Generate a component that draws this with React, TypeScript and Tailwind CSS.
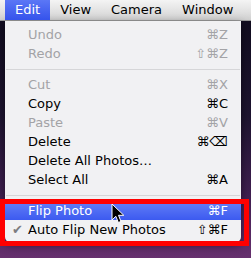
const menuBar = ["Edit", "View", "Camera", "Window"];

type Item = {
  label: string;
  shortcut?: string;
  disabled?: boolean;
  active?: boolean;
  checked?: boolean;
  separator?: boolean;
};

const items: Item[] = [
  { label: "Undo", shortcut: "⌘Z", disabled: true },
  { label: "Redo", shortcut: "⇧⌘Z", disabled: true },
  { label: "", separator: true },
  { label: "Cut", shortcut: "⌘X", disabled: true },
  { label: "Copy", shortcut: "⌘C" },
  { label: "Paste", shortcut: "⌘V", disabled: true },
  { label: "Delete", shortcut: "⌘⌫" },
  { label: "Delete All Photos…" },
  { label: "Select All", shortcut: "⌘A" },
  { label: "", separator: true },
  { label: "Flip Photo", shortcut: "⌘F", active: true },
  { label: "Auto Flip New Photos", shortcut: "⇧⌘F", checked: true },
];

function MenuRow({ item }: { item: Item }) {
  if (item.separator) {
    return (
      <div className="h-[12px] flex items-center px-[1px]">
        <div className="h-px w-full bg-[#d6d6d8]" />
      </div>
    );
  }
  const color = item.active
    ? "text-white"
    : item.disabled
      ? "text-[#a3a3a6]"
      : "text-black";
  return (
    <div
      className={`flex items-center h-[19px] pr-[13px] ${color} ${
        item.active ? "bg-[linear-gradient(180deg,#6480f7_0%,#3c5af0_100%)]" : ""
      }`}
    >
      <span className="w-[23px] pl-[7px] text-[#7c7c80] text-[13px] leading-none">
        {item.checked ? "✔" : ""}
      </span>
      <span className="flex-1">{item.label}</span>
      {item.shortcut && <span>{item.shortcut}</span>}
    </div>
  );
}

export default function App() {
  return (
    <div className="relative w-[251px] h-[258px] overflow-hidden bg-[linear-gradient(180deg,#0f0b1c_0%,#1e1430_45%,#3f1f50_75%,#66306e_100%)] font-['DejaVu_Sans',sans-serif] text-[13px]">
      <div className="flex h-[21px] pl-[5px] bg-[linear-gradient(180deg,#f4f4f4_0%,#e2e2e2_55%,#cfcfcf_100%)] border-b border-[#9a9a9a]">
        {menuBar.map((m, i) => (
          <div
            key={m}
            className={`flex items-center px-[10px] ${
              i === 0
                ? "text-white bg-[linear-gradient(180deg,#5b77f6_0%,#3553ec_100%)]"
                : "text-black"
            }`}
          >
            {m}
          </div>
        ))}
      </div>

      <div className="ml-[5px] w-[236px] pt-[4px] pb-[3px] bg-[#f1f1f3] rounded-b-[5px] shadow-[0_3px_8px_rgba(0,0,0,0.5)]">
        {items.map((item, i) => (
          <MenuRow key={i} item={item} />
        ))}
      </div>

      {/* red annotation box */}
      <div className="absolute left-0 top-[199px] w-[249px] h-[47px] border-[5px] border-[#ff0000]" />

      {/* cursor */}
      <svg
        className="absolute left-[111px] top-[203px]"
        width="14"
        height="21"
        viewBox="0 0 14 21"
      >
        <path
          d="M1 1 L1 17 L4.8 13.3 L7.4 19.5 L10 18.4 L7.5 12.3 L12.8 12.3 Z"
          fill="#000"
          stroke="#fff"
          strokeWidth="1"
          strokeLinejoin="round"
        />
      </svg>
    </div>
  );
}
